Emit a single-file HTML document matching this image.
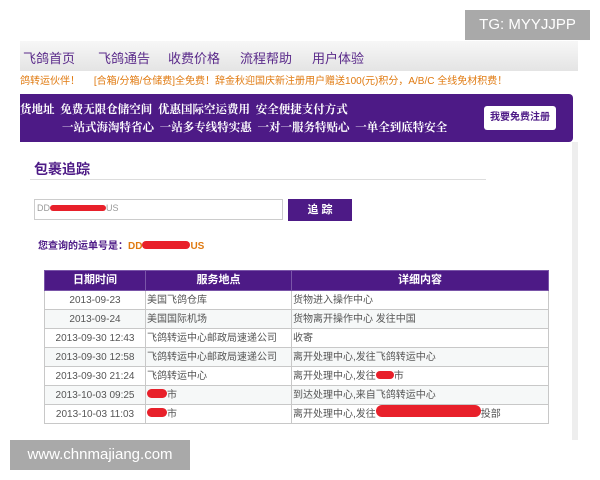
<!DOCTYPE html>
<html><head><meta charset="utf-8"><style>
*{margin:0;padding:0;box-sizing:border-box}
body{width:600px;height:480px;background:#fff;position:relative;overflow:hidden;font-family:"Liberation Sans","Noto Sans CJK SC",sans-serif}
.abs{position:absolute}
.tg{left:465px;top:10px;width:125px;height:30px;background:#a9a9a9;color:#fff;font-size:15px;line-height:30px;text-align:center}
.nav{left:20px;top:41px;width:558px;height:30px;background:linear-gradient(#f7f7f7,#e4e4e4);font-size:13px;color:#5a2a8a}
.nav span{position:absolute;top:7px}
.notice{left:20px;top:72px;width:558px;height:20px;font-size:10px;color:#e07a10;line-height:20px;white-space:nowrap}
.banner{left:20px;top:94px;width:553px;height:48px;background:#4d1a86;border-radius:0 4px 4px 0;color:#fff;font-family:"Noto Serif CJK SC",serif;font-weight:bold;font-size:11.5px}
.reg{left:484px;top:106px;width:72px;height:24px;background:#fff;border-radius:3px;color:#4d1a86;font-size:10px;line-height:24px;text-align:center;font-weight:bold}
.strip{left:572px;top:142px;width:6px;height:298px;background:#eee}
h2{position:absolute;left:34px;top:159px;font-size:14px;color:#4d1a86;font-weight:bold}
.hr{left:30px;top:179px;width:456px;height:1px;background:#ddd}
.inp{left:34px;top:199px;width:249px;height:21px;border:1px solid #ccc;font-size:9px;color:#999;padding:3px 2px}
.btn{left:288px;top:199px;width:64px;height:22px;background:#4d1a86;color:#fff;font-size:11px;text-align:center;line-height:22px;font-weight:bold}
.q{left:38px;top:237px;font-size:10px;color:#4d1a86;font-weight:bold}
.q b{color:#e07a10}
.red{background:#e8202a;border-radius:6px}
table{position:absolute;left:44px;top:270px;width:505px;border-collapse:collapse;font-size:10px;color:#555;table-layout:fixed}
td,th{border:1px solid #c8c8c8;height:19px;padding:0 1px;white-space:nowrap;overflow:hidden;line-height:17px}
th{background:#4d1a86;color:#fff;font-size:11px;height:20px;border-color:#7a55a8}
td:first-child{text-align:center}
tr:nth-child(odd) td{background:#f6f8f8}
.www{left:10px;top:440px;width:180px;height:30px;background:#a9a9a9;color:#fff;font-size:15px;line-height:30px;text-align:center}
</style></head><body>
<div class="abs tg">TG: MYYJJPP</div>
<div class="abs nav"><span style="left:3px">飞鸽首页</span><span style="left:78px">飞鸽通告</span><span style="left:148px">收费价格</span><span style="left:220px">流程帮助</span><span style="left:292px">用户体验</span></div>
<div class="abs notice">鸽转运伙伴！&nbsp;&nbsp;&nbsp;&nbsp;&nbsp;[合箱/分箱/仓储费]全免费！辞金秋迎国庆新注册用户赠送100(元)积分，A/B/C 全线免材积费！</div>
<div class="abs banner"><div class="abs" style="left:0;top:7px;white-space:nowrap">货地址&nbsp;&nbsp;免费无限仓储空间&nbsp;&nbsp;优惠国际空运费用&nbsp;&nbsp;安全便捷支付方式</div><div class="abs" style="left:42px;top:25px;white-space:nowrap">一站式海淘特省心&nbsp;&nbsp;一站多专线特实惠&nbsp;&nbsp;一对一服务特贴心&nbsp;&nbsp;一单全到底特安全</div></div>
<div class="abs reg">我要免费注册</div>
<div class="abs strip"></div>
<h2>包裹追踪</h2>
<div class="abs hr"></div>
<div class="abs inp">DD<span style="display:inline-block;width:56px;height:6px" class="red"></span>US</div>
<div class="abs btn">追 踪</div>
<div class="abs q">您查询的运单号是：<b>DD<span class="red" style="display:inline-block;width:48px;height:8px"></span>US</b></div>
<table>
<colgroup><col style="width:101px"><col style="width:146px"><col></colgroup>
<tr><th>日期时间</th><th>服务地点</th><th>详细内容</th></tr>
<tr><td>2013-09-23</td><td>美国飞鸽仓库</td><td>货物进入操作中心</td></tr>
<tr><td>2013-09-24</td><td>美国国际机场</td><td>货物离开操作中心 发往中国</td></tr>
<tr><td>2013-09-30 12:43</td><td>飞鸽转运中心邮政局速递公司</td><td>收寄</td></tr>
<tr><td>2013-09-30 12:58</td><td>飞鸽转运中心邮政局速递公司</td><td>离开处理中心,发往飞鸽转运中心</td></tr>
<tr><td>2013-09-30 21:24</td><td>飞鸽转运中心</td><td>离开处理中心,发往<span class="red" style="display:inline-block;width:18px;height:8px"></span>市</td></tr>
<tr><td>2013-10-03 09:25</td><td><span class="red" style="display:inline-block;width:20px;height:9px"></span>市</td><td>到达处理中心,来自飞鸽转运中心</td></tr>
<tr><td>2013-10-03 11:03</td><td><span class="red" style="display:inline-block;width:20px;height:9px"></span>市</td><td>离开处理中心,发往<span class="red" style="display:inline-block;width:105px;height:12px"></span>投部</td></tr>
</table>
<div class="abs www">www.chnmajiang.com</div>
</body></html>
